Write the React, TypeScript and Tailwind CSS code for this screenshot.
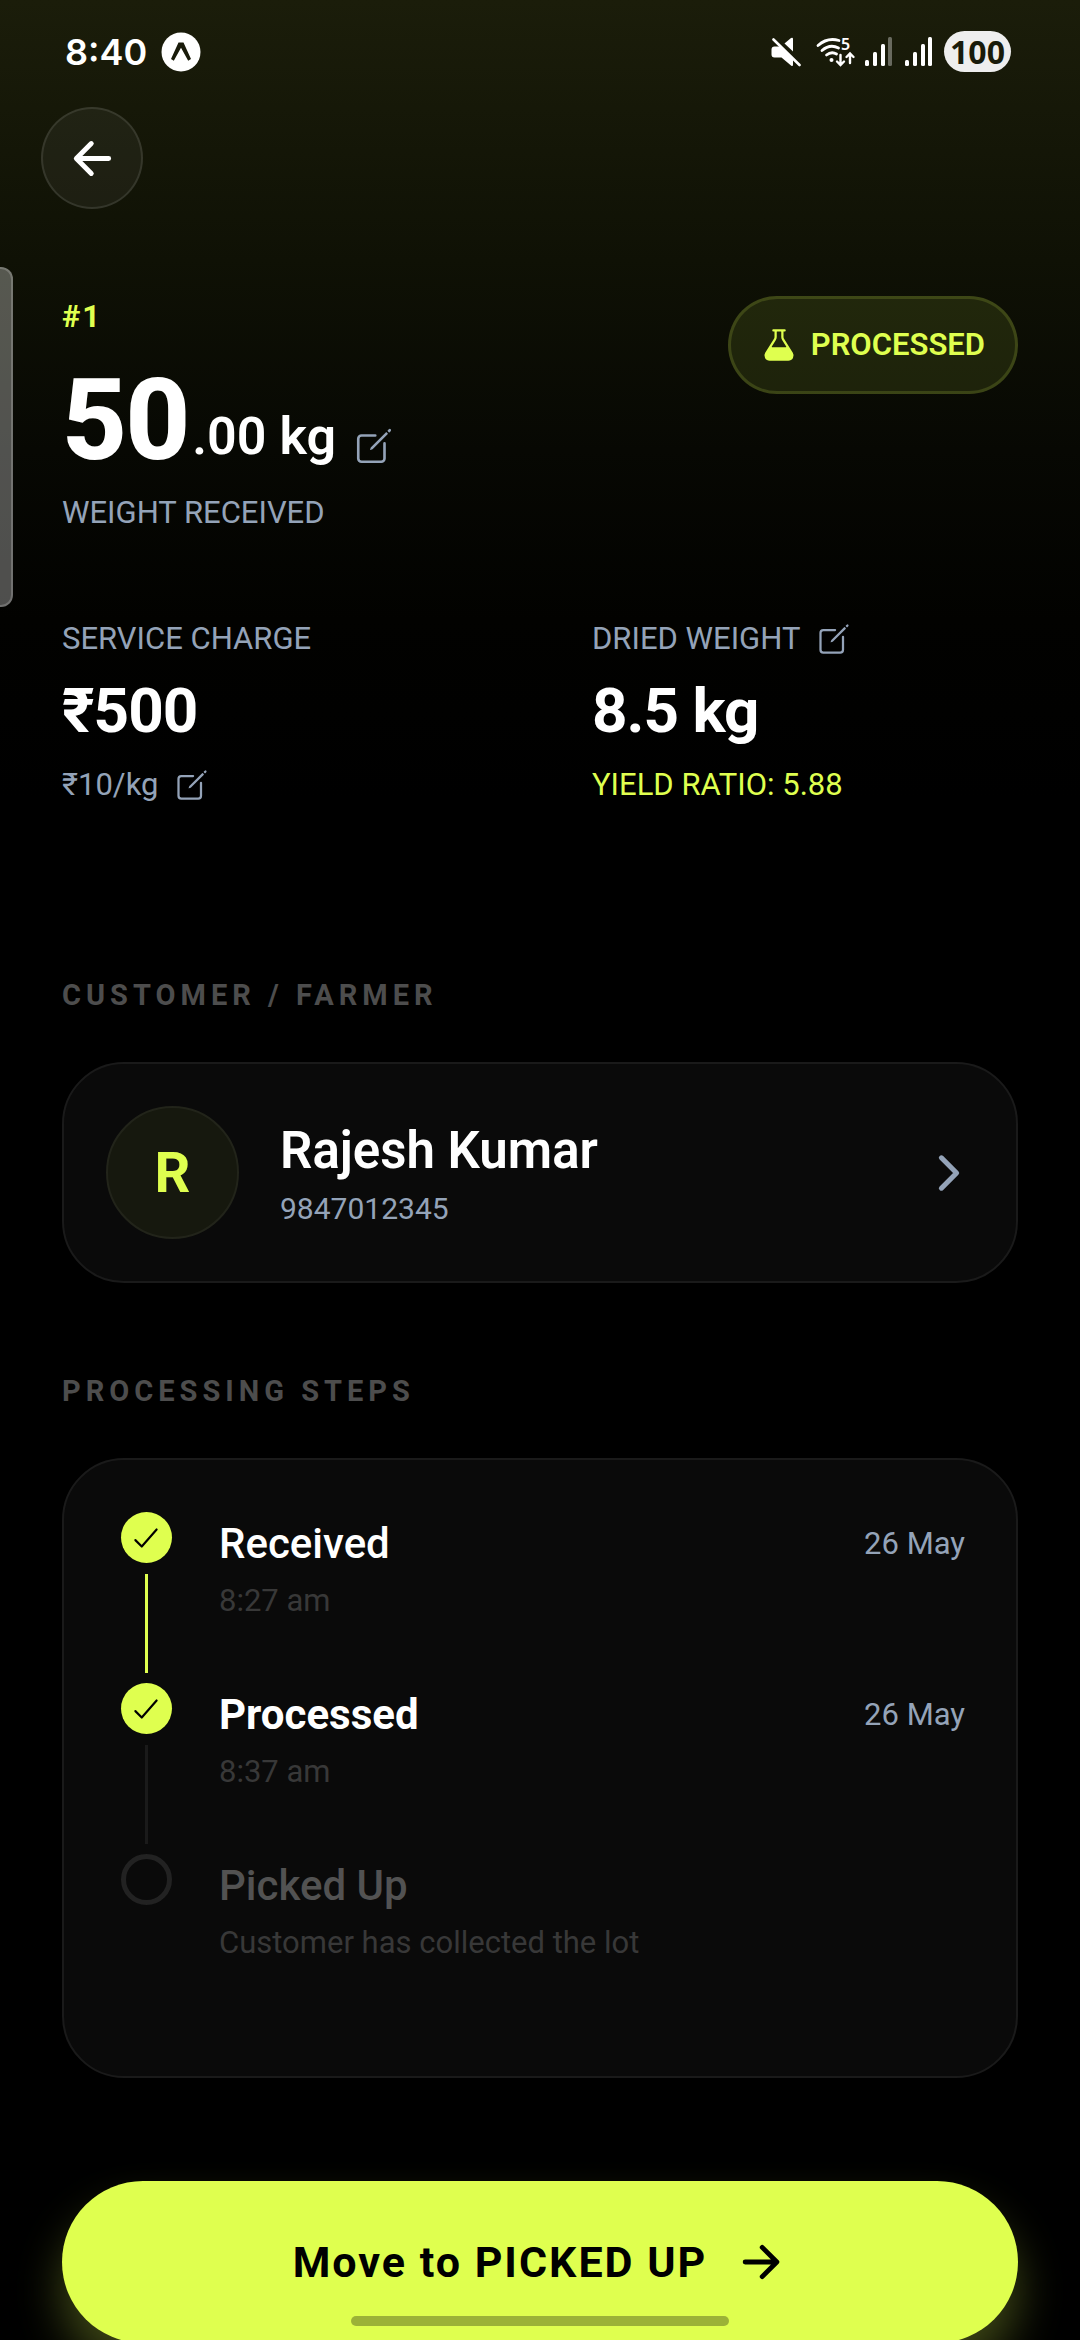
import {
  IoArrowBack,
  IoArrowForward,
  IoCheckmark,
  IoChevronForward,
  IoCreateOutline,
  IoFlask,
} from "react-icons/io5";

interface IStep {
  title: string;
  note: string;
  date?: string;
  state: "done" | "current" | "pending";
}

const steps: IStep[] = [
  { title: "Received", note: "8:27 am", date: "26 May", state: "done" },
  { title: "Processed", note: "8:37 am", date: "26 May", state: "current" },
  {
    title: "Picked Up",
    note: "Customer has collected the lot",
    state: "pending",
  },
];

const titleStyles = {
  done: "font-medium text-white",
  current: "font-bold text-white",
  pending: "font-medium text-[#525252]",
};

//--- Status bar ---//

const SignalIcon = ({ weak }: { weak?: boolean }) => (
  <svg width="30" height="30" viewBox="0 0 30 30" fill="#fff">
    <rect x="1" y="23" width="4" height="6" rx="1.5" />
    <rect x="9" y="15" width="4" height="14" rx="1.5" />
    <rect x="17" y="7" width="4" height="22" rx="1.5" />
    <rect
      x="24"
      y="0"
      width="4"
      height="29"
      rx="1.5"
      fillOpacity={weak ? 0.35 : 1}
    />
  </svg>
);

const MuteIcon = () => (
  <svg width="30" height="30" viewBox="0 0 30 30" fill="#fff">
    <path d="M0.5 12.5Q0.5 9.5 3.5 9.5H9L22 22.5V27.5Q22 30 20 28.6L10.5 20.5H3.5Q0.5 20.5 0.5 17.5Z" />
    <path d="M22 2V14.5L13.5 6.5L20 1Q22 0 22 2Z" />
    <path d="M2.5 2.5L28.5 28" stroke="#fff" strokeWidth="2.6" strokeLinecap="round" />
  </svg>
);

const WifiIcon = () => (
  <svg
    width="40"
    height="30"
    viewBox="0 0 40 30"
    fill="none"
    stroke="#fff"
    strokeWidth="2.8"
    strokeLinecap="round"
    className="overflow-visible"
  >
    <path d="M2 8.5Q11.5 0 23 3.5" />
    <path d="M6 13.5Q14 6.5 22.5 11" />
    <path d="M10.5 18Q15.5 14 20.5 17" />
    <circle cx="15.5" cy="23" r="2" fill="#fff" stroke="none" />
    <path d="M24.5 18V27M21 24.5L24.5 28L28 24.5" strokeWidth="2.4" />
    <path d="M34 26V16.5M30.5 20L34 16.5L37.5 20" strokeWidth="2.4" />
    <text
      x="25"
      y="13"
      fontSize="16"
      fontWeight="600"
      fill="#fff"
      stroke="none"
      className="font-['Noto_Sans',sans-serif]"
    >
      5
    </text>
  </svg>
);

const ExpoBadge = () => (
  <svg width="40" height="40" viewBox="0 0 40 40">
    <circle cx="20" cy="20" r="19.5" fill="#fff" />
    <path
      d="M17.5 10.5h5l7.5 16.5-2.8 1.8-7.2-13-7.2 13-2.8-1.8z"
      fill="#191b0a"
    />
  </svg>
);

const StatusBar = () => (
  <div className="flex h-[107px] items-start justify-between pt-[31px] pr-[69px] pl-[65px]">
    <div className="flex h-[41px] items-center gap-[14px]">
      <span className="font-['Inter',sans-serif] text-[36px] leading-10 font-semibold">
        8:40
      </span>
      <ExpoBadge />
    </div>
    <div className="flex h-[41px] items-center">
      <MuteIcon />
      <div className="ml-[15px] flex items-center gap-2">
        <WifiIcon />
        <SignalIcon weak />
      </div>
      <div className="ml-[10px] flex items-center gap-[10px]">
        <SignalIcon />
        <span className="flex h-[41px] w-[67px] items-center justify-center rounded-full bg-[#eeeeee] font-['Noto_Sans',sans-serif] text-[32px] leading-10 font-bold text-[#191b0a]">
          100
        </span>
      </div>
    </div>
  </div>
);

//--- Shared ---//

const EditButton = ({ label, size }: { label: string; size: number }) => (
  <button aria-label={label} className="text-[#94a3b8]">
    <IoCreateOutline size={size} />
  </button>
);

const SectionTitle = ({ children }: { children: string }) => (
  <h2 className="text-[29px] leading-9 font-bold tracking-[5px] text-[#4d4d4d] uppercase">
    {children}
  </h2>
);

//--- Sections ---//

const LotSummary = () => (
  <section className="mt-[87px] px-[62px]">
    <div className="flex items-start justify-between">
      <div>
        <p className="text-[31px] leading-[42px] font-bold tracking-[2px] text-[#dfff4f]">
          #1
        </p>
        <div className="mt-[17px] flex items-end gap-1">
          <span className="text-[113px] leading-[132px] font-extrabold tracking-[-2px]">
            50
          </span>
          <div className="flex items-end gap-[17px] pb-5">
            <span className="text-[52px] leading-[60px] font-semibold">
              .00 kg
            </span>
            <EditButton label="Edit received weight" size={42} />
          </div>
        </div>
        <p className="mt-2 text-[31px] leading-9 text-[#94a3b8]">
          WEIGHT RECEIVED
        </p>
      </div>

      <div className="flex h-[98px] items-center gap-[14px] rounded-full border-[3px] border-[#dfff4f]/15 bg-[#dfff4f]/10 px-[30px] text-[#dfff4f]">
        <IoFlask size={36} />
        <span className="text-[31px] leading-9 font-semibold">PROCESSED</span>
      </div>
    </div>

    <div className="mt-[90px] grid grid-cols-2 gap-[104px]">
      <div className="text-[31px] leading-9 text-[#94a3b8]">
        <p>SERVICE CHARGE</p>
        <p className="mt-[18px] mb-5 text-[62px] leading-[72px] font-bold tracking-[-1px] text-white">
          ₹500
        </p>
        <div className="flex items-center gap-4">
          <span>₹10/kg</span>
          <EditButton label="Edit rate" size={36} />
        </div>
      </div>
      <div className="text-[31px] leading-9 text-[#94a3b8]">
        <div className="flex items-center gap-4">
          <span>DRIED WEIGHT</span>
          <EditButton label="Edit dried weight" size={36} />
        </div>
        <p className="mt-[18px] mb-5 text-[62px] leading-[72px] font-bold tracking-[-1px] text-white">
          8.5 kg
        </p>
        <p className="text-[#dfff4f]">YIELD RATIO: 5.88</p>
      </div>
    </div>
  </section>
);

const CustomerCard = () => (
  <section className="mt-[174px] px-[62px]">
    <SectionTitle>Customer / Farmer</SectionTitle>
    <button className="mt-[49px] flex w-full items-center gap-[41px] rounded-[62px] border-2 border-[#1a1a1a] bg-[#0a0a0a] py-[42px] pr-10 pl-[42px] text-left">
      <span className="flex size-[133px] items-center justify-center rounded-full border-2 border-[#22241a] bg-[#16180e] text-[56px] font-bold text-[#dfff4f]">
        R
      </span>
      <span className="flex flex-1 flex-col gap-2">
        <span className="text-[51px] leading-[64px] font-semibold">
          Rajesh Kumar
        </span>
        <span className="text-[30px] leading-9 text-[#94a3b8]">9847012345</span>
      </span>
      <IoChevronForward size={54} className="text-[#94a3b8]" />
    </button>
  </section>
);

const StepMarker = ({ state, last }: { state: IStep["state"]; last: boolean }) => (
  <div className="flex w-[62px] flex-col items-center">
    {state === "pending" ? (
      <span className="size-[51px] rounded-full border-[5px] border-[#222222]" />
    ) : (
      <span className="flex size-[51px] items-center justify-center rounded-full bg-[#dfff4f] text-black">
        <IoCheckmark size={34} />
      </span>
    )}
    {!last && (
      <span
        className={
          state === "done"
            ? "mt-[11px] mb-[10px] w-[3px] flex-1 bg-[#dfff4f]"
            : "mt-[11px] mb-[10px] w-[3px] flex-1 bg-[#1a1a1a]"
        }
      />
    )}
  </div>
);

const ProcessingSteps = () => (
  <section className="mt-[90px] px-[62px]">
    <SectionTitle>Processing Steps</SectionTitle>
    <ol className="mt-[49px] rounded-[62px] border-2 border-[#1a1a1a] bg-[#0a0a0a] px-[51px] pt-[52px] pb-[51px]">
      {steps.map(({ title, note, date, state }, idx) => (
        <li key={title} className="flex min-h-[171px] gap-[42px]">
          <StepMarker state={state} last={idx === steps.length - 1} />
          <div className="flex-1">
            <div className="flex items-center justify-between leading-[64px]">
              <h3 className={`text-[42px] ${titleStyles[state]}`}>{title}</h3>
              {date && (
                <span className="text-[31px] text-[#94a3b8]">{date}</span>
              )}
            </div>
            <p className="mt-[7px] text-[31px] leading-9 text-[#383838]">
              {note}
            </p>
          </div>
        </li>
      ))}
    </ol>
  </section>
);

const App = () => {
  return (
    <div className="relative h-screen overflow-hidden bg-black font-['Roboto',sans-serif] text-white">
      <div className="bg-[linear-gradient(#1b1d0a,#0f1105_260px,#070803_450px,#020200_620px,#000_800px)]">
        <StatusBar />
        <header className="px-[41px]">
          <button
            aria-label="Back"
            className="flex size-[102px] items-center justify-center rounded-full border-2 border-white/10 bg-white/5"
          >
            <IoArrowBack size={53} />
          </button>
        </header>

        <main>
          <LotSummary />
          <CustomerCard />
          <ProcessingSteps />
          <div className="mt-[103px] px-[62px]">
            <button className="flex h-[162px] w-full items-center justify-center gap-7 rounded-full bg-[#dfff4f] text-[43px] font-bold tracking-[2px] text-black shadow-[0_28px_45px_rgba(223,255,79,0.28)]">
              Move to PICKED UP
              <IoArrowForward size={52} />
            </button>
          </div>
        </main>
      </div>

      {/* edge panel handle */}
      <div className="absolute top-[267px] left-0 h-[340px] w-[13px] rounded-r-[12px] border-2 border-l-0 border-white/20 bg-white/30" />
      {/* home indicator */}
      <div className="absolute bottom-[14px] left-1/2 h-[10px] w-[35%] -translate-x-1/2 rounded-full bg-black/30" />
    </div>
  );
};

export default App;
